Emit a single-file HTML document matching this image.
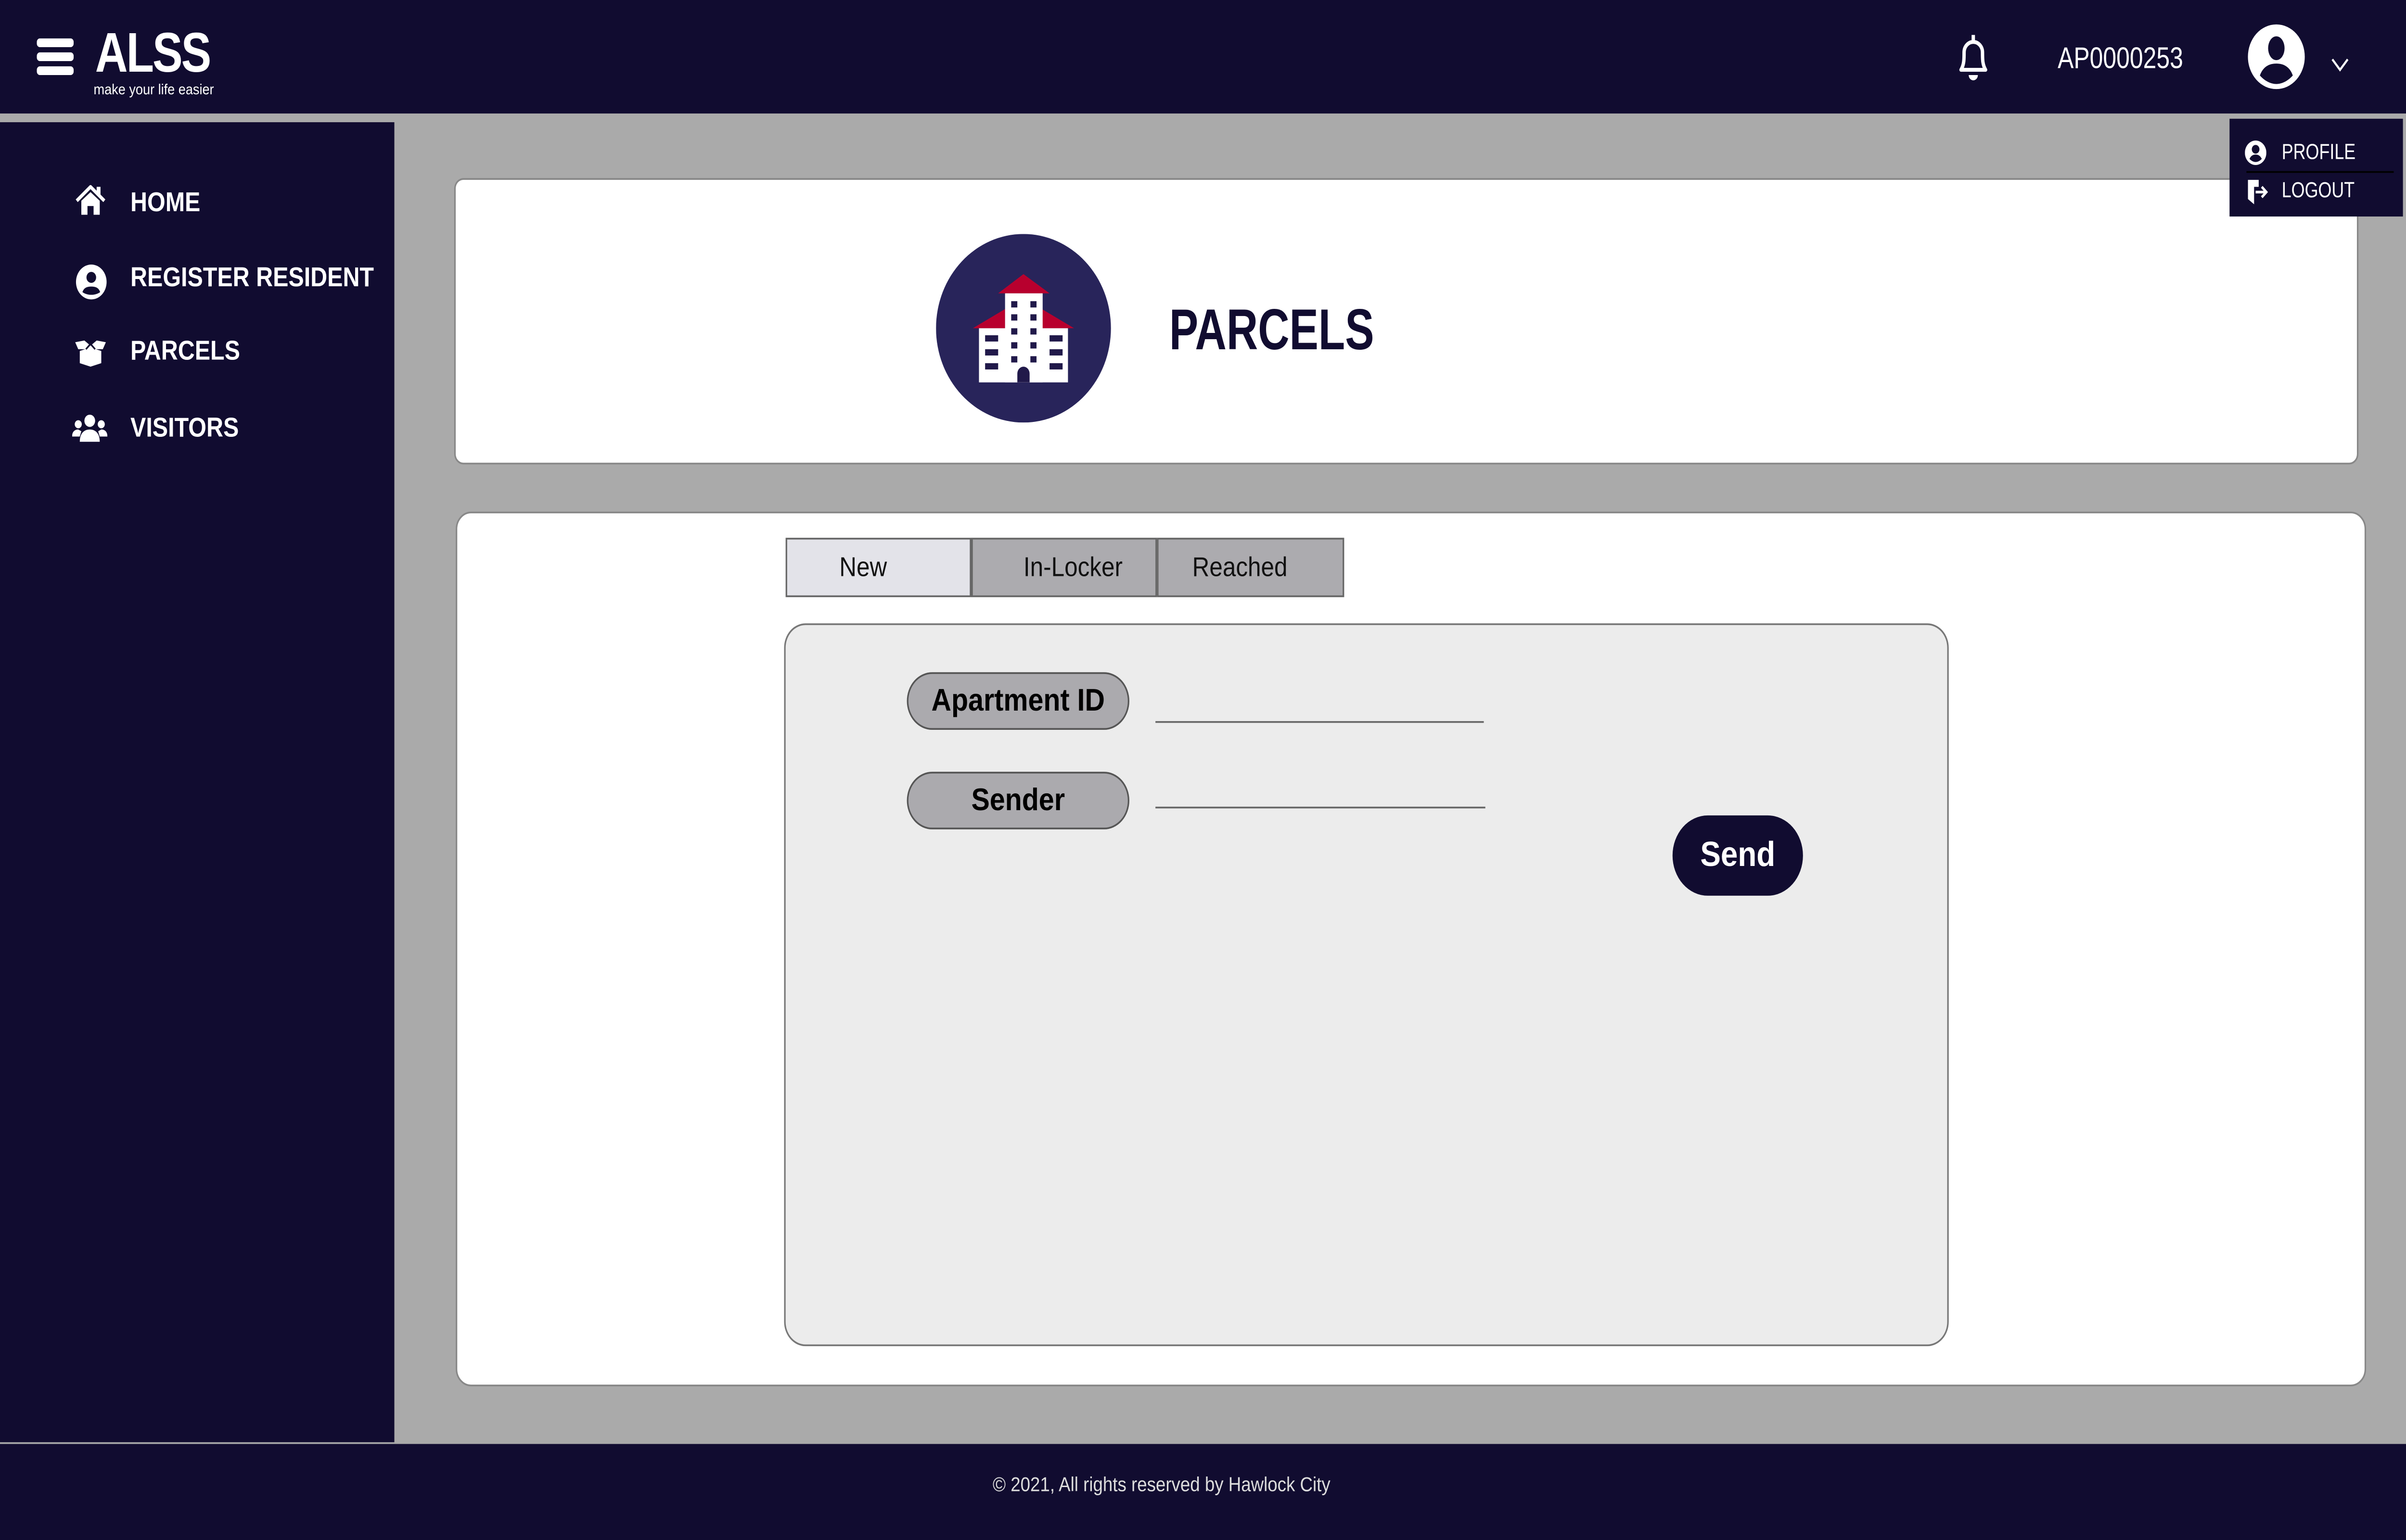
<!DOCTYPE html>
<html><head><meta charset="utf-8"><style>
html,body{margin:0;padding:0;width:100vw;height:100vh;overflow:hidden;background:#aaa}
svg.root{display:block;width:100vw;height:100vh}
#s{position:relative;width:1568px;height:882px;background:#aaaaaa;font-family:"Liberation Sans",sans-serif;overflow:hidden}
.a{position:absolute}
.dk{background:#110c30}
.nav{position:absolute;left:85px;color:#fff;font-weight:bold;font-size:15.5px;line-height:20px;transform:scaleX(0.98);transform-origin:0 0}
.tab{position:absolute;top:308px;height:34px;border:1px solid #666;box-sizing:border-box;font-size:15.5px;line-height:33px;color:#111}
.pill{position:absolute;left:591px;width:145px;height:33px;border:1px solid #555;box-sizing:border-box;border-radius:17px;background:#abaaae;font-weight:bold;font-size:18px;line-height:31px;text-align:center;color:#000}
</style></head><body>
<svg class="root" viewBox="0 0 1568 882" preserveAspectRatio="none" xmlns="http://www.w3.org/2000/svg">
<foreignObject x="0" y="0" width="1568" height="882">
<div xmlns="http://www.w3.org/1999/xhtml" id="s">
<div class="a dk" style="left:0;top:0;width:1568px;height:65px"></div>
<div class="a dk" style="left:0;top:70px;width:257px;height:756px"></div>
<div class="a dk" style="left:0;top:827px;width:1568px;height:55px"></div>
<div class="a" style="left:0;top:844px;width:1514px;text-align:center;color:#ddd;font-size:11.5px;line-height:14px">© 2021, All rights reserved by Hawlock City</div>
<div class="a" style="left:24px;top:22px;width:24px;height:5px;background:#fff;border-radius:2px"></div>
<div class="a" style="left:24px;top:30px;width:24px;height:5px;background:#fff;border-radius:2px"></div>
<div class="a" style="left:24px;top:38px;width:24px;height:5px;background:#fff;border-radius:2px"></div>
<div class="a" style="left:62px;top:14px;color:#fff;font-weight:bold;font-size:32px;line-height:32px;letter-spacing:-1px;transform:scaleX(0.92);transform-origin:0 0">ALSS</div>
<div class="a" style="left:61px;top:46px;color:#fff;font-size:8.5px">make your life easier</div>
<svg class="a" style="left:1273px;top:18px" width="26" height="30" viewBox="0 0 26 30"><path d="M13 2v3M5 22c2-3 2-6 2-10a6 6 0 0112 0c0 4 0 7 2 10z" fill="none" stroke="#fff" stroke-width="2.2" stroke-linejoin="round"/><path d="M10 25a3 3 0 006 0z" fill="#fff"/></svg>
<div class="a" style="left:1341px;top:24px;color:#fff;font-size:17px;transform:scaleX(0.92);transform-origin:0 0">AP0000253</div>
<svg class="a" style="left:1464px;top:13px" width="39" height="39" viewBox="0 0 40 40"><circle cx="20" cy="20" r="19" fill="#fff"/><ellipse cx="20" cy="15" rx="5.5" ry="7" fill="#110c30"/><path d="M9 31c2-5 6-7 11-7s9 2 11 7c-3 3-7 5-11 5s-8-2-11-5z" fill="#110c30"/></svg>
<svg class="a" style="left:1519px;top:32px" width="12" height="10"><path d="M1 2l5 6 5-6" fill="none" stroke="#fff" stroke-width="1.3"/></svg>
<svg class="a" style="left:49px;top:106px" width="20" height="18" viewBox="0 0 20 18"><path d="M1 9L10 1l9 8" fill="none" stroke="#fff" stroke-width="2"/><rect x="14" y="1" width="2.5" height="5" fill="#fff"/><path d="M4 9l6-5 6 5v8h-4v-5H8v5H4z" fill="#fff"/></svg>
<div class="nav" style="top:107px">HOME</div>
<svg class="a" style="left:49px;top:151px" width="21" height="21" viewBox="0 0 40 40"><circle cx="20" cy="20" r="19" fill="#fff"/><circle cx="20" cy="15" r="6" fill="#110c30"/><path d="M9 31c2-5 6-6 11-6s9 1 11 6c-3 2-7 3-11 3s-8-1-11-3z" fill="#110c30"/></svg>
<div class="nav" style="top:150px">REGISTER RESIDENT</div>
<svg class="a" style="left:48px;top:194px" width="22" height="16" viewBox="0 0 22 16"><path d="M1 2l6-1 4 3 4-3 6 1-2 4H3z" fill="#fff"/><path d="M4 7l7-2 7 2v7l-7 2-7-2z" fill="#fff"/><path d="M8 6l3-3 3 3" stroke="#110c30" fill="none"/></svg>
<div class="nav" style="top:192px">PARCELS</div>
<svg class="a" style="left:47px;top:237px" width="23" height="17" viewBox="0 0 23 17"><circle cx="11.5" cy="4" r="3.5" fill="#fff"/><circle cx="4" cy="6" r="2.3" fill="#fff"/><circle cx="19" cy="6" r="2.3" fill="#fff"/><path d="M5 16c0-5 3-7 6.5-7s6.5 2 6.5 7z" fill="#fff"/><path d="M0 13c0-3 2-4 4-4l2 1-1 3z M23 13c0-3-2-4-4-4l-2 1 1 3z" fill="#fff"/></svg>
<div class="nav" style="top:236px">VISITORS</div>
<div class="a" style="left:296px;top:102px;width:1241px;height:164px;background:#fff;border:1px solid #888;box-sizing:border-box;border-radius:6px"></div>
<div class="a dk" style="left:1453px;top:68px;width:113px;height:56px"></div>
<svg class="a" style="left:1463px;top:80px" width="14" height="15" viewBox="0 0 14 15"><circle cx="7" cy="7.5" r="7" fill="#fff"/><circle cx="7" cy="5.5" r="2.5" fill="#110c30"/><path d="M3 11c1-2 2.5-2.5 4-2.5s3 .5 4 2.5c-1 1-2.5 1.8-4 1.8S4 12 3 11z" fill="#110c30"/></svg>
<div class="a" style="left:1487px;top:80px;color:#fff;font-size:12.5px;transform:scaleX(0.9);transform-origin:0 0">PROFILE</div>
<div class="a" style="left:1464px;top:98px;width:96px;height:1px;background:#000"></div>
<svg class="a" style="left:1464px;top:102px" width="16" height="16"><path d="M1 1h7v4H5v10L1 12z" fill="#fff"/><path d="M6 8h6M10 5l3 3-3 3" stroke="#fff" fill="none" stroke-width="1.5"/></svg>
<div class="a" style="left:1487px;top:102px;color:#fff;font-size:12.5px;transform:scaleX(0.9);transform-origin:0 0">LOGOUT</div>
<svg class="a" style="left:610px;top:134px" width="115" height="108" viewBox="0 0 115 108"><ellipse cx="57" cy="54" rx="57" ry="54" fill="#28245a"/>
<path d="M57 23L40.5 34H74z" fill="#b8002e"/><path d="M45 43L24 54H45zM69 43L90 54H69z" fill="#b8002e"/>
<rect x="45" y="34" width="24.5" height="51" fill="#fff"/><rect x="28" y="54" width="58" height="31" fill="#fff"/>
<g fill="#21194a"><rect x="49" y="38.5" width="4" height="3.6"/><rect x="61.5" y="38.5" width="4" height="3.6"/><rect x="49" y="46" width="4" height="3.6"/><rect x="61.5" y="46" width="4" height="3.6"/><rect x="49" y="54" width="4" height="3.6"/><rect x="61.5" y="54" width="4" height="3.6"/><rect x="49" y="62" width="4" height="3.6"/><rect x="61.5" y="62" width="4" height="3.6"/><rect x="49" y="70" width="4" height="3.6"/><rect x="61.5" y="70" width="4" height="3.6"/><rect x="32" y="58" width="8.5" height="3.6"/><rect x="32" y="66" width="8.5" height="3.6"/><rect x="32" y="74" width="8.5" height="3.6"/><rect x="74" y="58" width="8.5" height="3.6"/><rect x="74" y="66" width="8.5" height="3.6"/><rect x="74" y="74" width="8.5" height="3.6"/><path d="M53 85v-5a4 4 0 018 0v5z"/></g></svg>
<div class="a" style="left:762px;top:170px;font-weight:bold;font-size:33px;color:#110c30;line-height:38px;transform:scaleX(0.86);transform-origin:0 0">PARCELS</div>
<div class="a" style="left:297px;top:293px;width:1245px;height:501px;background:#fff;border:1px solid #888;box-sizing:border-box;border-radius:10px"></div>
<div class="tab" style="left:512px;width:121px;background:#e3e3e9;padding-left:34px">New</div>
<div class="tab" style="left:633px;width:121px;background:#acabaf;padding-left:33px">In-Locker</div>
<div class="tab" style="left:754px;width:122px;background:#acabaf;padding-left:22px">Reached</div>
<div class="a" style="left:511px;top:357px;width:759px;height:414px;background:#ececec;border:1px solid #777;box-sizing:border-box;border-radius:14px"></div>
<div class="pill" style="top:385px">Apartment ID</div>
<div class="pill" style="top:442px">Sender</div>
<div class="a" style="left:753px;top:413px;width:214px;height:1px;background:#666"></div>
<div class="a" style="left:753px;top:462px;width:215px;height:1px;background:#666"></div>
<div class="a dk" style="left:1090px;top:467px;width:85px;height:46px;border-radius:23px;color:#fff;font-weight:bold;font-size:20px;line-height:46px;text-align:center">Send</div>
</div>
</foreignObject>
</svg>
</body></html>
